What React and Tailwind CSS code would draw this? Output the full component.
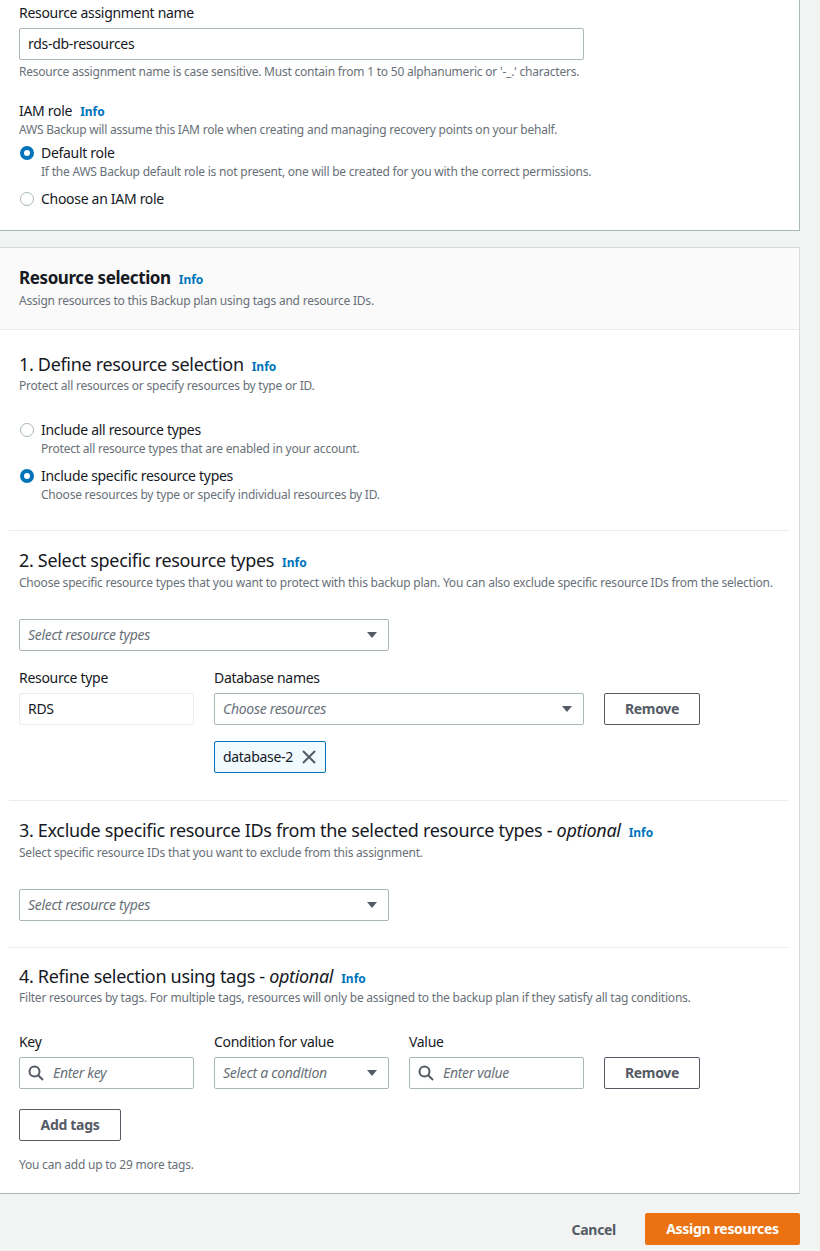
import { useState } from 'react';

const FONT = { fontFamily: '"Noto Sans", "Open Sans", Arial, sans-serif' };

// Noto Sans runs a bit wider than the original font, so tighten it up
const SMALL = 'text-[12px] leading-[16px] tracking-[-0.22px] text-[#687078]';
const BODY = 'text-[14px] leading-[22px] tracking-[-0.3px]';

function Info() {
    return <span className="ml-[8px] text-[12px] leading-none font-bold tracking-normal text-[#0073bb]">Info</span>;
}

function Radio({ checked, label, desc }) {
    return (
        <div>
            <div className="flex items-center h-[22px]">
                {checked ? (
                    <span className="w-[14px] h-[14px] rounded-full border-[4px] border-[#0073bb] bg-white ml-[1px]" />
                ) : (
                    <span className="w-[14px] h-[14px] rounded-full border-[1.5px] border-[#aab7b8] bg-white ml-[1px]" />
                )}
                <span className={`ml-[7px] ${BODY} text-[#16191f]`}>{label}</span>
            </div>
            {desc && <p className={`pl-[22px] ${SMALL}`}>{desc}</p>}
        </div>
    );
}

function Caret() {
    return (
        <svg width="12" height="8" viewBox="0 0 12 8" className="shrink-0">
            <path d="M1 1h10L6 7z" fill="#545b64" />
        </svg>
    );
}

function SelectBox({ placeholder, width }) {
    return (
        <div className={`${width} h-[32px] border border-[#aab7b8] rounded-[2px] bg-white flex items-center justify-between pl-[8px] pr-[10px]`}>
            <span className={`${BODY} italic text-[#687078]`}>{placeholder}</span>
            <Caret />
        </div>
    );
}

function SearchIcon() {
    return (
        <svg width="16" height="16" viewBox="0 0 16 16" fill="none" stroke="#545b64" strokeWidth="2">
            <circle cx="6.5" cy="6.5" r="5" />
            <path d="M10.2 10.2L15 15" />
        </svg>
    );
}

function SearchInput({ placeholder }) {
    return (
        <div className="w-[175px] h-[32px] border border-[#aab7b8] rounded-[2px] bg-white flex items-center pl-[8px]">
            <SearchIcon />
            <span className={`ml-[9px] ${BODY} italic text-[#687078]`}>{placeholder}</span>
        </div>
    );
}

function OutlineButton({ children, width }) {
    return (
        <button className={`${width} h-[32px] border border-[#545b64] rounded-[2px] bg-white text-[14px] leading-[20px] font-bold tracking-[-0.3px] text-[#545b64]`}>
            {children}
        </button>
    );
}

function SectionHeading({ children }) {
    return (
        <h3 className="text-[18px] leading-[24px] tracking-[-0.32px] text-[#16191f]">
            {children}
        </h3>
    );
}

export default function App() {
    const [name] = useState('rds-db-resources');

    return (
        <div style={FONT} className="bg-[#f2f3f3] min-h-[1251px] pr-[20px] text-[#16191f]">
            {/* top card */}
            <div className="bg-white border-r border-b border-[#aab7b8] pl-[19px] pt-[2px] pb-[20px]">
                <label className={`block ${BODY}`}>Resource assignment name</label>
                <div className={`mt-[4px] w-[565px] h-[32px] border border-[#aab7b8] rounded-[2px] flex items-center pl-[8px] ${BODY}`}>
                    {name}
                </div>
                <p className={`mt-[4px] ${SMALL}`}>
                    Resource assignment name is case sensitive. Must contain from 1 to 50 alphanumeric or '-_.' characters.
                </p>
                <div className={`mt-[20px] ${BODY}`}>
                    IAM role<Info />
                </div>
                <p className={SMALL}>
                    AWS Backup will assume this IAM role when creating and managing recovery points on your behalf.
                </p>
                <div className="mt-[4px]">
                    <Radio checked label="Default role" desc="If the AWS Backup default role is not present, one will be created for you with the correct permissions." />
                </div>
                <div className="mt-[8px]">
                    <Radio label="Choose an IAM role" />
                </div>
            </div>

            {/* resource selection card */}
            <div className="mt-[16px] bg-white border-r border-b border-t border-[#d5dbdb] border-b-[#aab7b8]">
                <div className="bg-[#fafafa] border-b border-[#eaeded] pl-[19px] pt-[18px] pb-[20px]">
                    <h2 className="text-[17px] leading-[24px] font-bold tracking-[-0.4px]">
                        Resource selection<Info />
                    </h2>
                    <p className={`mt-[3px] ${SMALL}`}>
                        Assign resources to this Backup plan using tags and resource IDs.
                    </p>
                </div>

                <div className="mx-[9px] mr-[10px]">
                    {/* 1 */}
                    <div className="px-[10px] pt-[22px] pb-[27px]">
                        <SectionHeading>1. Define resource selection<Info /></SectionHeading>
                        <p className={`mt-[2px] ${SMALL}`}>Protect all resources or specify resources by type or ID.</p>
                        <div className="mt-[25px]">
                            <Radio label="Include all resource types" desc="Protect all resource types that are enabled in your account." />
                        </div>
                        <div className="mt-[8px]">
                            <Radio checked label="Include specific resource types" desc="Choose resources by type or specify individual resources by ID." />
                        </div>
                    </div>

                    {/* 2 */}
                    <div className="border-t border-[#eaeded] px-[10px] pt-[17px] pb-[27px]">
                        <SectionHeading>2. Select specific resource types<Info /></SectionHeading>
                        <p className={`mt-[3px] whitespace-nowrap ${SMALL}`}>
                            Choose specific resource types that you want to protect with this backup plan. You can also exclude specific resource IDs from the selection.
                        </p>
                        <div className="mt-[28px]">
                            <SelectBox placeholder="Select resource types" width="w-[370px]" />
                        </div>
                        <div className="mt-[16px] flex gap-[20px]">
                            <div>
                                <label className={`block ${BODY}`}>Resource type</label>
                                <div className={`mt-[4px] w-[175px] h-[32px] border border-[#eaeded] rounded-[2px] flex items-center pl-[8px] ${BODY}`}>RDS</div>
                            </div>
                            <div>
                                <label className={`block ${BODY}`}>Database names</label>
                                <div className="mt-[4px]">
                                    <SelectBox placeholder="Choose resources" width="w-[370px]" />
                                </div>
                                <div className={`mt-[16px] inline-flex items-center h-[32px] border border-[#0073bb] rounded-[2px] bg-[#f1faff] pl-[8px] pr-[9px] ${BODY}`}>
                                    database-2
                                    <svg width="14" height="14" viewBox="0 0 14 14" className="ml-[9px]" stroke="#545b64" strokeWidth="2">
                                        <path d="M1 1l12 12M13 1L1 13" />
                                    </svg>
                                </div>
                            </div>
                            <div className="pt-[26px]">
                                <OutlineButton width="w-[96px]">Remove</OutlineButton>
                            </div>
                        </div>
                    </div>

                    {/* 3 */}
                    <div className="border-t border-[#eaeded] px-[10px] pt-[17px] pb-[26px]">
                        <SectionHeading>
                            3. Exclude specific resource IDs from the selected resource types - <i>optional</i><Info />
                        </SectionHeading>
                        <p className={`mt-[3px] ${SMALL}`}>Select specific resource IDs that you want to exclude from this assignment.</p>
                        <div className="mt-[28px]">
                            <SelectBox placeholder="Select resource types" width="w-[370px]" />
                        </div>
                    </div>

                    {/* 4 */}
                    <div className="border-t border-[#eaeded] px-[10px] pt-[16px] pb-[20px]">
                        <SectionHeading>
                            4. Refine selection using tags - <i>optional</i><Info />
                        </SectionHeading>
                        <p className={`mt-[2px] ${SMALL}`}>
                            Filter resources by tags. For multiple tags, resources will only be assigned to the backup plan if they satisfy all tag conditions.
                        </p>
                        <div className="mt-[25px] flex gap-[20px]">
                            <div>
                                <label className={`block ${BODY}`}>Key</label>
                                <div className="mt-[4px]"><SearchInput placeholder="Enter key" /></div>
                            </div>
                            <div>
                                <label className={`block ${BODY}`}>Condition for value</label>
                                <div className="mt-[4px]"><SelectBox placeholder="Select a condition" width="w-[175px]" /></div>
                            </div>
                            <div>
                                <label className={`block ${BODY}`}>Value</label>
                                <div className="mt-[4px]"><SearchInput placeholder="Enter value" /></div>
                            </div>
                            <div className="pt-[26px]">
                                <OutlineButton width="w-[96px]">Remove</OutlineButton>
                            </div>
                        </div>
                        <div className="mt-[20px]">
                            <OutlineButton width="w-[102px]">Add tags</OutlineButton>
                        </div>
                        <p className={`mt-[16px] ${SMALL}`}>You can add up to 29 more tags.</p>
                    </div>
                </div>
            </div>

            {/* footer */}
            <div className="mt-[19px] flex justify-end items-center">
                <button className="text-[14px] font-bold tracking-[-0.3px] text-[#545b64] mr-[29px]">Cancel</button>
                <button className="w-[155px] h-[32px] bg-[#ec7211] rounded-[2px] text-[14px] leading-[20px] font-bold tracking-[-0.3px] text-white">Assign resources</button>
            </div>
        </div>
    );
}
